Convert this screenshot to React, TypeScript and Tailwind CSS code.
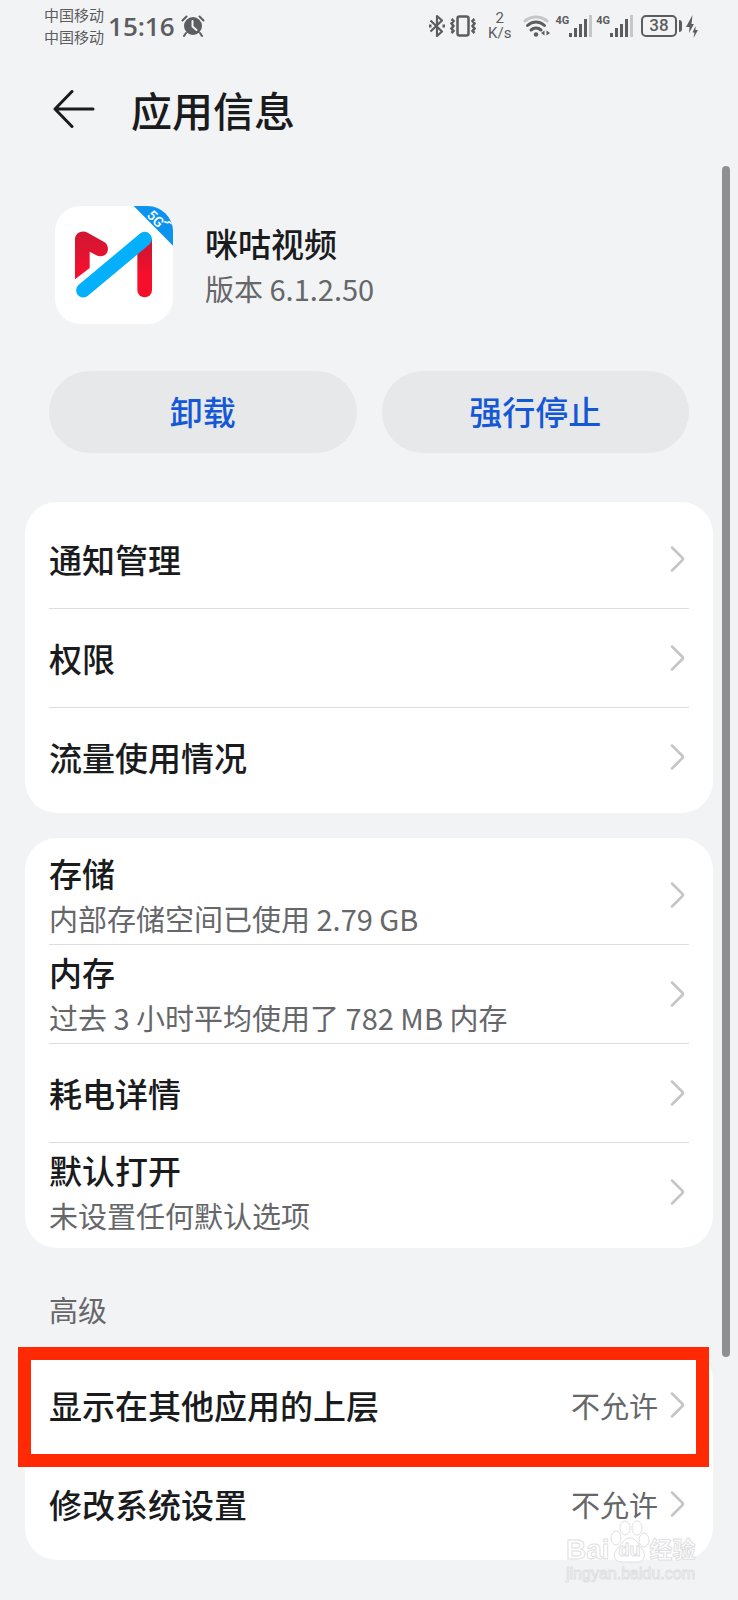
import type { ReactNode } from 'react'

interface SettingItem {
  title: string
  summary?: string
  value?: string
}

const usageItems: SettingItem[] = [
  { title: '通知管理' },
  { title: '权限' },
  { title: '流量使用情况' },
]

const resourceItems: SettingItem[] = [
  { title: '存储', summary: '内部存储空间已使用 2.79 GB' },
  { title: '内存', summary: '过去 3 小时平均使用了 782 MB 内存' },
  { title: '耗电详情' },
  { title: '默认打开', summary: '未设置任何默认选项' },
]

const advancedItems: SettingItem[] = [
  { title: '显示在其他应用的上层', value: '不允许' },
  { title: '修改系统设置', value: '不允许' },
]

function AlarmIcon() {
  return (
    <svg width="24" height="22" viewBox="0 0 24 22" fill="none">
      <circle cx="12" cy="11" r="9" fill="#5c5d60" />
      <path d="M1.5 5.5L5.5 1.5M22.5 5.5L18.5 1.5M5 18l-2 3M19 18l2 3" stroke="#5c5d60" strokeWidth="2" strokeLinecap="round" />
      <path d="M11.5 6v5.5l4 3.5" stroke="#f2f3f5" strokeWidth="2" strokeLinecap="round" />
    </svg>
  )
}

function BluetoothIcon() {
  return (
    <svg width="18" height="24" viewBox="0 0 18 24" fill="none" stroke="#5c5d60" strokeWidth="2.2" strokeLinejoin="round">
      <path d="M2.5 6.5l11.500 11-5 4.500V2l5 4.500-11.500 11" />
      <path d="M1 12h2.500M14.500 12H17" strokeWidth="3" />
    </svg>
  )
}

function VibrateIcon() {
  return (
    <svg width="26" height="22" viewBox="0 0 26 22" fill="none" stroke="#5c5d60">
      <rect x="7.5" y="1.5" width="11" height="19" rx="2" strokeWidth="2.5" />
      <path d="M1.500 4l2 2-2 2.500 2 2.500-2 2.500 2 2.500-2 2M24.500 4l-2 2 2 2.500-2 2.500 2 2.500-2 2.500 2 2" strokeWidth="2.500" />
    </svg>
  )
}

function WifiIcon() {
  return (
    <svg width="28" height="22" viewBox="0 0 28 22" fill="none" strokeLinecap="round">
      <path d="M2 6C8.500 0.500 17.500 0.500 24 6" stroke="#c6c7ca" strokeWidth="3" />
      <path d="M4.500 10.500c5-4.600 12-4.600 17 0M8 15c3-2.600 7-2.600 10 0" stroke="#5c5d60" strokeWidth="3" />
      <circle cx="13" cy="19.500" r="2.200" fill="#5c5d60" />
      <path d="M21.500 15.500v5l-3.500-2.500zM23.500 15.500v5l3.500-2.500z" fill="#5c5d60" />
    </svg>
  )
}

function Signal() {
  return (
    <div className="flex items-start">
      <span className="font-['Roboto',sans-serif] text-[11px] leading-3 font-bold">4G</span>
      <svg width="23" height="22" viewBox="0 0 23 22" strokeWidth="3" stroke="#5c5d60">
        <path d="M1.500 18v4M6.500 13v9M11.500 9v13M16.500 4v18" />
        <path d="M21.500 0v22" stroke="#c6c7ca" />
      </svg>
    </div>
  )
}

function StatusBar() {
  return (
    <div className="flex h-13 items-center justify-between pr-10 pl-11 text-[#5c5d60]">
      <div className="flex items-center">
        <div className="text-[15px] leading-[22px]">
          <div>中国移动</div>
          <div>中国移动</div>
        </div>
        <span className="ml-1 font-['Open_Sans','Noto_Sans_CJK_SC',sans-serif] text-[26px] leading-8 font-semibold">15:16</span>
        <span className="ml-1.5"><AlarmIcon /></span>
      </div>
      <div className="flex items-center">
        <BluetoothIcon />
        <span className="ml-1"><VibrateIcon /></span>
        <div className="ml-3 text-center font-['Roboto',sans-serif] text-[15px] leading-[15px]">
          <div>2</div>
          <div>K/s</div>
        </div>
        <span className="ml-3"><WifiIcon /></span>
        <div className="ml-1 flex gap-1">
          <Signal />
          <Signal />
        </div>
        <div className="ml-2 flex items-center gap-0.5">
          <div className="flex h-[22px] w-9 items-center justify-center rounded-[5px] border-2 border-[#5c5d60] font-['Roboto',sans-serif] text-[17px] font-medium">38</div>
          <div className="h-3 w-[3px] rounded-r-sm bg-[#5c5d60]" />
        </div>
        <svg className="ml-1" width="12" height="24" viewBox="0 0 12 24" fill="#5c5d60">
          <path d="M6.500 1L0 13h3.500l-0.500 6 5-9H5.500zM9.500 12L6.500 18.500h2l-1 5.500 4.500-8h-2.500z" />
        </svg>
      </div>
    </div>
  )
}

function AppLogo() {
  return (
    <svg className="shrink-0" width="118" height="118" viewBox="0 0 354 354">
      <defs>
        <clipPath id="tile">
          <rect width="354" height="354" rx="76" />
        </clipPath>
        <linearGradient id="leftRed" x1="0" y1="0" x2="0" y2="1">
          <stop offset="0" stopColor="#cf1733" />
          <stop offset="1" stopColor="#fb0f2d" />
        </linearGradient>
        <linearGradient id="rightRed" x1="0" y1="0" x2="0" y2="1">
          <stop offset="0.200" stopColor="#d5142f" />
          <stop offset="0.600" stopColor="#f50f2b" />
        </linearGradient>
      </defs>
      <g clipPath="url(#tile)">
        <rect width="354" height="354" fill="#fff" />
        <path d="M236 0H354V119z" fill="#0c93ee" />
        <text x="302" y="53" textAnchor="middle" transform="rotate(45 302 38)" fill="#fff" fontSize="42" fontWeight="500" fontFamily="Roboto, sans-serif">5G</text>
        <path d="M328 46q7 6 14 2l12 6" fill="none" stroke="#fff" strokeWidth="5" />
        <path d="M60 100C60 80 82 71 98 80L149 109C162 118 162 138 150 147C141 152 132 152 124 148L104 137V186L60 220Z" fill="url(#leftRed)" />
        <path d="M247 98H291V252A22 22 0 0 1 247 252Z" fill="url(#rightRed)" />
        <path d="M85 253L269 99" stroke="#04b0fb" strokeWidth="43" strokeLinecap="round" />
      </g>
    </svg>
  )
}

function Chevron() {
  return (
    <svg className="mr-1 shrink-0" width="15" height="26" viewBox="0 0 15 26" fill="none" stroke="#c5c5c6" strokeWidth="2.5" strokeLinecap="round" strokeLinejoin="round">
      <path d="M2 1.500l10.500 10.500q1 1 0 2L2 24.500" />
    </svg>
  )
}

function SettingRow({ item }: { item: SettingItem }) {
  return (
    <li>
      <button className="flex h-[98px] w-full items-center justify-between text-left">
        <span className="flex flex-col">
          <span className="text-[33px] leading-[46px] font-medium text-[#1a1b1d]">{item.title}</span>
          {item.summary && (
            <span className="text-[29px] leading-[44px] text-[#66676a]">{item.summary}</span>
          )}
        </span>
        <span className="flex items-center gap-3">
          {item.value && <span className="text-[29px] leading-[44px] text-[#66676a]">{item.value}</span>}
          <Chevron />
        </span>
      </button>
    </li>
  )
}

function Card({ items, children }: { items: SettingItem[]; children?: ReactNode }) {
  return (
    <section className="relative mx-[25px] rounded-[32px] bg-white px-6 pt-2 pb-[7px]">
      <ul className="divide-y divide-[#dcdddf]">
        {items.map((item) => (
          <SettingRow key={item.title} item={item} />
        ))}
      </ul>
      {children}
    </section>
  )
}

function Watermark() {
  return (
    <div className="pointer-events-none absolute right-10 bottom-4 w-[132px] text-white [-webkit-text-stroke:1px_#dfe0e2]">
      <div className="flex h-11 items-end">
        <span className="font-['Liberation_Sans',sans-serif] text-[28px] leading-7 font-bold">Bai</span>
        <span className="relative flex h-11 w-10 justify-center">
          <svg className="absolute inset-0" width="40" height="44" viewBox="0 0 40 44" fill="#fff" stroke="#dfe0e2">
            <ellipse cx="6" cy="18" rx="5" ry="7" />
            <ellipse cx="15" cy="8" rx="5" ry="7" />
            <ellipse cx="27" cy="8" rx="5" ry="7" />
            <ellipse cx="34" cy="20" rx="5" ry="7" />
            <path d="M20 18c6 0 8 6 12 11 5 6 2 13-5 13H12C4 42 2 35 7 29c5-5 7-11 13-11z" />
          </svg>
          <span className="relative pt-5 font-['Liberation_Sans',sans-serif] text-lg leading-5 font-bold">du</span>
        </span>
        <span className="text-[23px] leading-8 font-bold">经验</span>
      </div>
      <div className="font-['Liberation_Sans',sans-serif] text-base leading-5">jingyan.baidu.com</div>
    </div>
  )
}

export default function App() {
  return (
    <div className="relative min-h-screen overflow-hidden bg-[#f2f3f5] pb-[39px] font-['Noto_Sans_CJK_SC',sans-serif] text-[#1a1b1d]">
      <StatusBar />
      <header className="flex h-[114px] items-center gap-9 pl-[53px]">
        <button aria-label="返回">
          <svg width="42" height="38" viewBox="0 0 42 38" fill="none" stroke="#1a1b1d" strokeWidth="3" strokeLinecap="round" strokeLinejoin="round">
            <path d="M19 1.500L2 19l17 17.500M2 19h38" />
          </svg>
        </button>
        <h1 className="text-[41px] leading-[60px] font-medium">应用信息</h1>
      </header>

      <div className="flex items-center gap-8 px-[55px] pt-10">
        <AppLogo />
        <div>
          <h2 className="text-[33px] leading-[46px] font-medium">咪咕视频</h2>
          <p className="text-[29px] leading-[44px] text-[#66676a]">版本 6.1.2.50</p>
        </div>
      </div>

      <div className="mt-[47px] mb-[49px] flex gap-[25px] px-[49px] text-[33px] font-medium text-[#1558d6]">
        <button className="h-[82px] flex-1 rounded-full bg-[#e6e8ea]">卸载</button>
        <button className="h-[82px] flex-1 rounded-full bg-[#e6e8ea]">强行停止</button>
      </div>

      <Card items={usageItems} />
      <div className="h-[25px]" />
      <Card items={resourceItems} />
      <h3 className="px-[49px] pt-10 pb-[18px] text-[29px] leading-[42px] text-[#66676a]">高级</h3>
      <Card items={advancedItems}>
        <div className="pointer-events-none absolute -top-px -right-[-4px] -left-[7px] h-[120px] border-[13px] border-[#ff2a04]" />
      </Card>

      <div className="absolute top-[166px] right-2 h-[1191px] w-2 rounded-full bg-[#8f9093]" />
      <Watermark />
    </div>
  )
}
